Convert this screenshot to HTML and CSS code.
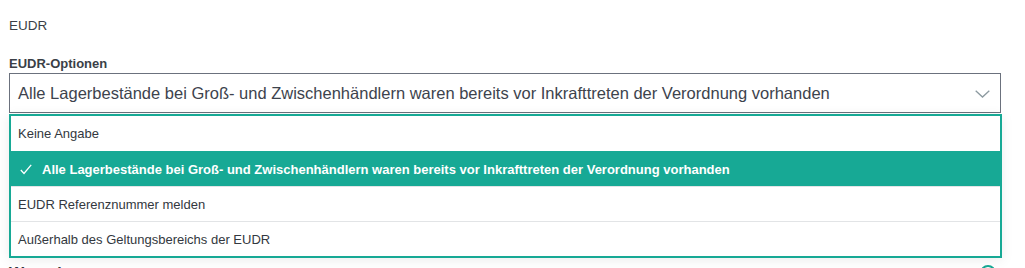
FILE: index.html
```html
<!DOCTYPE html>
<html lang="de">
<head>
<meta charset="utf-8">
<link rel="stylesheet" href="styles.css">
</head>
<body>
<div class="page">
  <div class="section-title">EUDR</div>
  <div class="field">
    <div class="label">EUDR-Optionen</div>
    <div class="select">
      <span class="select-value">Alle Lagerbestände bei Groß- und Zwischenhändlern waren bereits vor Inkrafttreten der Verordnung vorhanden</span>
      <svg class="chevron" width="15" height="8" viewBox="0 0 15 8"><path d="M0.7 0.7 L7.5 7 L14.3 0.7" fill="none" stroke="#8c9aa0" stroke-width="1.3"/></svg>
    </div>
    <ul class="menu">
      <li class="opt">Keine Angabe</li>
      <li class="opt selected"><svg class="check" width="12" height="11" viewBox="0 0 12 11"><path d="M0.8 6 L4 9.5 L11.2 0.8" fill="none" stroke="#ffffff" stroke-width="1.3"/></svg>Alle Lagerbestände bei Groß- und Zwischenhändlern waren bereits vor Inkrafttreten der Verordnung vorhanden</li>
      <li class="opt">EUDR Referenznummer melden</li>
      <li class="opt">Außerhalb des Geltungsbereichs der EUDR</li>
    </ul>
  </div>
  <div class="next-row">
    <div class="next-title">Warenbewegungen</div>
    <span class="next-icon"></span>
  </div>
</div>
</body>
</html>
```
FILE: styles.css
```css
html, body {
  margin: 0;
  padding: 0;
  background: #ffffff;
}
body {
  font-family: Arial, "Liberation Sans", sans-serif;
  color: #333840;
  min-height: 268px;
}
.page {
  padding: 17px 24px 0 9px;
}
.section-title {
  font-size: 13.5px;
  line-height: 18px;
  color: #3a3f47;
}
.field {
  margin-top: 20px;
}
.label {
  font-size: 13px;
  font-weight: bold;
  line-height: 17px;
  color: #3a3f47;
  margin-bottom: 1px;
}
.select {
  display: flex;
  align-items: center;
  justify-content: space-between;
  height: 40px;
  box-sizing: border-box;
  border: 1px solid #6b717d;
  padding: 0 10px 0 8px;
}
.select-value {
  font-size: 16.5px;
  color: #3d434d;
  white-space: nowrap;
}
.chevron {
  display: block;
  margin-top: 1px;
}
.menu {
  position: relative;
  margin: 1px -1px 0 0;
  padding: 0;
  list-style: none;
  background: #ffffff;
  border: 2px solid #17a995;
  box-shadow: 0 2px 12px rgba(0, 0, 0, 0.08);
  z-index: 2;
}
.opt {
  display: flex;
  align-items: center;
  height: 35px;
  box-sizing: border-box;
  padding: 0 7px;
  font-size: 13px;
  color: #333840;
  border-top: 1px solid #e2e4e6;
  white-space: nowrap;
}
.opt:first-child {
  border-top: none;
}
.opt.selected {
  background: #17a995;
  color: #ffffff;
  font-weight: bold;
  border-top-color: #17a995;
}
.check {
  display: block;
  margin: 0 10px 0 2px;
}
.next-row {
  display: flex;
  justify-content: space-between;
  align-items: flex-start;
  margin-top: 6px;
}
.next-title {
  font-size: 16px;
  font-weight: bold;
  color: #333840;
  line-height: 20px;
}
.next-icon {
  width: 16px;
  height: 16px;
  box-sizing: border-box;
  border: 2px solid #17a995;
  border-radius: 50%;
  margin: 1px 5px 0 0;
}
```
